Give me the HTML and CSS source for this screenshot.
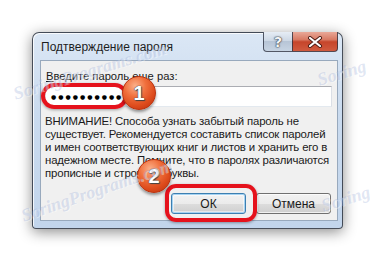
FILE: index.html
```html
<!DOCTYPE html>
<html lang="ru">
<head>
  <meta charset="UTF-8">
  <title>Подтверждение пароля</title>
  <link rel="stylesheet" href="styles.css">
</head>
<body>
  <div class="page">
    <div class="window">
      <div class="titlebar">
        <span class="title">Подтверждение пароля</span>
        <div class="caption-btns">
          <span class="cap-btn help">?</span>
          <span class="cap-btn close">
            <svg width="16" height="12" viewBox="0 0 16 12">
              <path d="M3 2 L13 10 M13 2 L3 10" stroke="#4a1a14" stroke-width="4" stroke-linecap="round"/>
              <path d="M3 2 L13 10 M13 2 L3 10" stroke="#fff" stroke-width="2.2" stroke-linecap="round"/>
            </svg>
          </span>
        </div>
      </div>
      <div class="client">
        <div class="field-label"><u>В</u>ведите пароль еще раз:</div>
        <div class="pwd-input">●●●●●●●●●●</div>
        <p class="warning">ВНИМАНИЕ! Способа узнать забытый пароль не<br>существует. Рекомендуется составить список паролей<br>и имен соответствующих книг и листов и хранить его в<br>надежном месте. Помните, что в паролях различаются<br>прописные и строчные буквы.</p>
        <div class="buttons">
          <button class="btn btn-default">ОК</button>
          <button class="btn">Отмена</button>
        </div>
      </div>
    </div>

    <!-- callouts over the dialog -->
    <div class="ring ring-pwd"></div>
    <div class="badge badge-1">1</div>
    <div class="ring ring-ok"></div>
    <div class="badge badge-2">2</div>

    <!-- site watermarks -->
    <span class="wm wm-a">SoringPrograms.com</span>
    <span class="wm wm-b">Soring</span>
    <span class="wm wm-c">SoringPrograms.com</span>
    <span class="wm wm-d">Soring</span>
  </div>
</body>
</html>
```

FILE: styles.css
```css
body {
  margin: 0;
  background: #fff;
  font-family: 'Liberation Sans', Arial, sans-serif;
  font-size: 12px;
  color: #1a1a1a;
  overflow: hidden;
}
.page {
  position: relative;
  width: 378px;
  height: 262px;
  padding: 32px 0 0 32px;
  box-sizing: border-box;
}
/* Win7 dialog frame */
.window {
  width: 311px;
  height: 197px;
  box-sizing: border-box;
  display: flex;
  flex-direction: column;
  border: 1px solid rgba(35, 40, 50, 0.8);
  border-radius: 7px 7px 4px 4px;
  background: linear-gradient(to bottom, #dbe7f5 0%, #cadbef 40%, #c2d5ec 100%);
  box-shadow: 0 3px 14px rgba(0, 0, 0, 0.45), inset 1px 1px 0 rgba(255, 255, 255, 0.8);
}
.titlebar {
  height: 27px;
  display: flex;
  align-items: flex-start;
  flex-shrink: 0;
}
.title {
  padding: 7px 0 0 8px;
  line-height: 15px;
  color: #1e1e1e;
  white-space: nowrap;
}
.caption-btns {
  display: flex;
  margin: -1px 4px 0 auto;
}
.cap-btn {
  height: 20px;
  box-sizing: border-box;
  display: flex;
  align-items: center;
  justify-content: center;
  border: 1px solid rgba(45, 50, 65, 0.8);
  border-top: none;
}
.help {
  width: 29px;
  border-radius: 0 0 0 4px;
  border-right: none;
  background: linear-gradient(to bottom, #e6edf5 0%, #cdd8e5 45%, #b7c5d6 50%, #c7d4e3 100%);
  font-family: 'DejaVu Sans', sans-serif;
  font-weight: bold;
  font-size: 14px;
  color: #f4f6f8;
  text-shadow: 0 0 1px #3a3f48, 0 0 1px #3a3f48, 0 0 2px #3a3f48;
}
.close {
  width: 46px;
  border-radius: 0 0 4px 0;
  background: linear-gradient(to bottom, #e9a898 0%, #d87a64 40%, #c6452b 52%, #d05a3f 100%);
}
.client {
  flex: 1;
  margin: 0 4px 7px 7px;
  padding: 8px 5px 0 4px;
  background: #f0f0f0;
  border: 1px solid #98a9bd;
}
.field-label {
  line-height: 15px;
  padding-left: 1px;
  font-size: 11.2px;
  white-space: nowrap;
}
.field-label u {
  text-decoration-thickness: 1px;
}
.pwd-input {
  height: 21px;
  margin-top: 2px;
  box-sizing: border-box;
  background: #fff;
  border: 1px solid #abadb3;
  border-color: #abadb3 #dbdfe6 #e3e9ef #e2e3ea;
  padding-left: 5px;
  font-family: 'DejaVu Sans', sans-serif;
  font-size: 6px;
  line-height: 19px;
  letter-spacing: 2px;
  color: #000;
}
.warning {
  margin: 8px 0 0 0;
  font-size: 11.4px;
  line-height: 13px;
  letter-spacing: -0.15px;
  white-space: nowrap;
}
.buttons {
  display: flex;
  justify-content: flex-end;
  gap: 10px;
  margin: 13px 1px 0 0;
}
.btn {
  width: 75px;
  height: 21px;
  padding: 0;
  font-family: inherit;
  font-size: 12px;
  color: #1a1a1a;
  border: 1px solid #707070;
  border-radius: 3px;
  background: linear-gradient(to bottom, #f2f2f2 0%, #ebebeb 50%, #dddddd 50%, #cfcfcf 100%);
  box-shadow: inset 0 0 0 1px rgba(255, 255, 255, 0.7);
}
.btn-default {
  border-color: #3c7fb1;
  box-shadow: inset 0 0 0 1px #a6d3f2, inset 0 0 0 2px rgba(255, 255, 255, 0.5);
}
/* red callouts */
.ring {
  position: absolute;
  box-sizing: border-box;
  border: 4px solid #e5121c;
  box-shadow: 0 1px 3px rgba(0, 0, 0, 0.35);
}
.ring-pwd {
  left: 41px;
  top: 83px;
  width: 87px;
  height: 26px;
  border-radius: 13px;
}
.ring-ok {
  left: 165px;
  top: 184px;
  width: 92px;
  height: 38px;
  border-radius: 11px;
}
.badge {
  position: absolute;
  width: 34px;
  height: 34px;
  box-sizing: border-box;
  border-radius: 50%;
  border: 1px solid #b8320f;
  background: radial-gradient(circle at 38% 28%, #fbb08a 0%, #f0703d 35%, #de4c1d 65%, #b92d0c 100%);
  box-shadow: 0 2px 3px rgba(0, 0, 0, 0.4);
  display: flex;
  align-items: center;
  justify-content: center;
  font-family: 'Liberation Sans', sans-serif;
  font-weight: bold;
  font-size: 20px;
  color: #fff;
  text-shadow: 0 0 1px #444, 0 0 1px #444, 1px 1px 1px #444;
}
.badge-1 {
  left: 122px;
  top: 76px;
}
.badge-2 {
  left: 137px;
  top: 159px;
}
.wm {
  position: absolute;
  font-family: 'Liberation Serif', serif;
  font-style: italic;
  font-weight: bold;
  font-size: 18px;
  color: rgba(150, 170, 215, 0.3);
  text-shadow: 1px 1px 0 rgba(255, 255, 255, 0.4);
  white-space: nowrap;
  transform-origin: left center;
}
.wm-a { left: 14px; top: 84px; transform: rotate(-17deg); }
.wm-b { left: 318px; top: 70px; transform: rotate(-17deg); }
.wm-c { left: 22px; top: 206px; transform: rotate(-19deg); }
.wm-d { left: 322px; top: 196px; transform: rotate(-17deg); }
```
